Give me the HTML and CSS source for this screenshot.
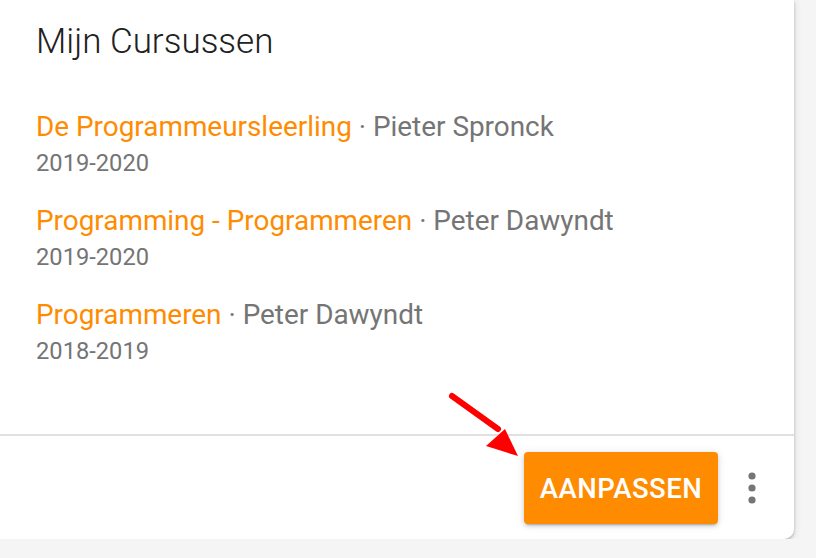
FILE: index.html
```html
<!DOCTYPE html>
<html>
<head>
<meta charset="utf-8">
<link rel="stylesheet" href="styles.css">
</head>
<body>
<div class="card">
  <div class="content">
    <h2 class="title">Mijn Cursussen</h2>
    <ul class="courses">
      <li class="course">
        <div class="line"><a class="link" href="#">De Programmeursleerling</a><span class="teacher"> · Pieter Spronck</span></div>
        <div class="year">2019-2020</div>
      </li>
      <li class="course">
        <div class="line"><a class="link" href="#">Programming - Programmeren</a><span class="teacher"> · Peter Dawyndt</span></div>
        <div class="year">2019-2020</div>
      </li>
      <li class="course">
        <div class="line"><a class="link" href="#">Programmeren</a><span class="teacher"> · Peter Dawyndt</span></div>
        <div class="year">2018-2019</div>
      </li>
    </ul>
  </div>
  <div class="actions">
    <button class="btn">AANPASSEN</button>
    <button class="more" aria-label="meer">
      <svg width="10" height="32" viewBox="0 0 10 32"><circle cx="5" cy="4" r="3.6" fill="#757575"/><circle cx="5" cy="16" r="3.6" fill="#757575"/><circle cx="5" cy="28" r="3.6" fill="#757575"/></svg>
    </button>
    <svg class="arrow" width="90" height="70" viewBox="0 0 90 70">
      <line x1="4" y1="5" x2="50" y2="38" stroke="#ff0000" stroke-width="6" stroke-linecap="round"/>
      <polygon points="38,55 57,38 70,65" fill="#ff0000"/>
    </svg>
  </div>
</div>
</body>
</html>
```
FILE: styles.css
```css
html, body {
  margin: 0;
  padding: 0;
  background: #f5f5f5;
  font-family: Roboto, "Liberation Sans", Arial, sans-serif;
}
.card {
  width: 794px;
  height: 539px;
  background: #ffffff;
  border-radius: 0 0 10px 0;
  box-shadow: 0 2px 3px rgba(0,0,0,0.2), 0 1px 8px rgba(0,0,0,0.12);
  display: flex;
  flex-direction: column;
}
.content {
  flex: 1;
  padding: 20px 36px 0 36px;
  border-bottom: 2px solid #e0e0e0;
}
.title {
  margin: 0;
  font-size: 35px;
  font-weight: 300;
  line-height: 44px;
  color: #212121;
  letter-spacing: 0;
}
.courses {
  list-style: none;
  margin: 43px 0 0 0;
  padding: 0;
}
.course {
  margin-bottom: 21px;
}
.line {
  font-size: 27.9px;
  line-height: 40px;
  color: #757575;
  white-space: nowrap;
}
.link {
  color: #ff8c00;
  text-decoration: none;
}
.teacher {
  color: #757575;
}
.year {
  font-size: 23.7px;
  line-height: 33px;
  color: #757575;
}
.actions {
  height: 103px;
  display: flex;
  align-items: flex-start;
  justify-content: flex-end;
  padding: 16px 21px 0 0;
  box-sizing: border-box;
  position: relative;
}
.btn {
  width: 194px;
  height: 72px;
  background: #ff8c00;
  color: #ffffff;
  border: none;
  border-radius: 4px;
  font-family: Roboto, "Liberation Sans", Arial, sans-serif;
  font-size: 27.5px;
  font-weight: 500;
  letter-spacing: 0.5px;
  box-shadow: 0 3px 2px -2px rgba(0,0,0,0.2), 0 2px 4px rgba(0,0,0,0.14), 0 1px 10px rgba(0,0,0,0.1);
  padding: 0;
}
.more {
  width: 42px;
  height: 72px;
  margin-left: 13px;
  background: none;
  border: none;
  padding: 0;
  display: flex;
  align-items: center;
  justify-content: center;
}
.arrow {
  position: absolute;
  left: 448px;
  top: -45px;
}
```
